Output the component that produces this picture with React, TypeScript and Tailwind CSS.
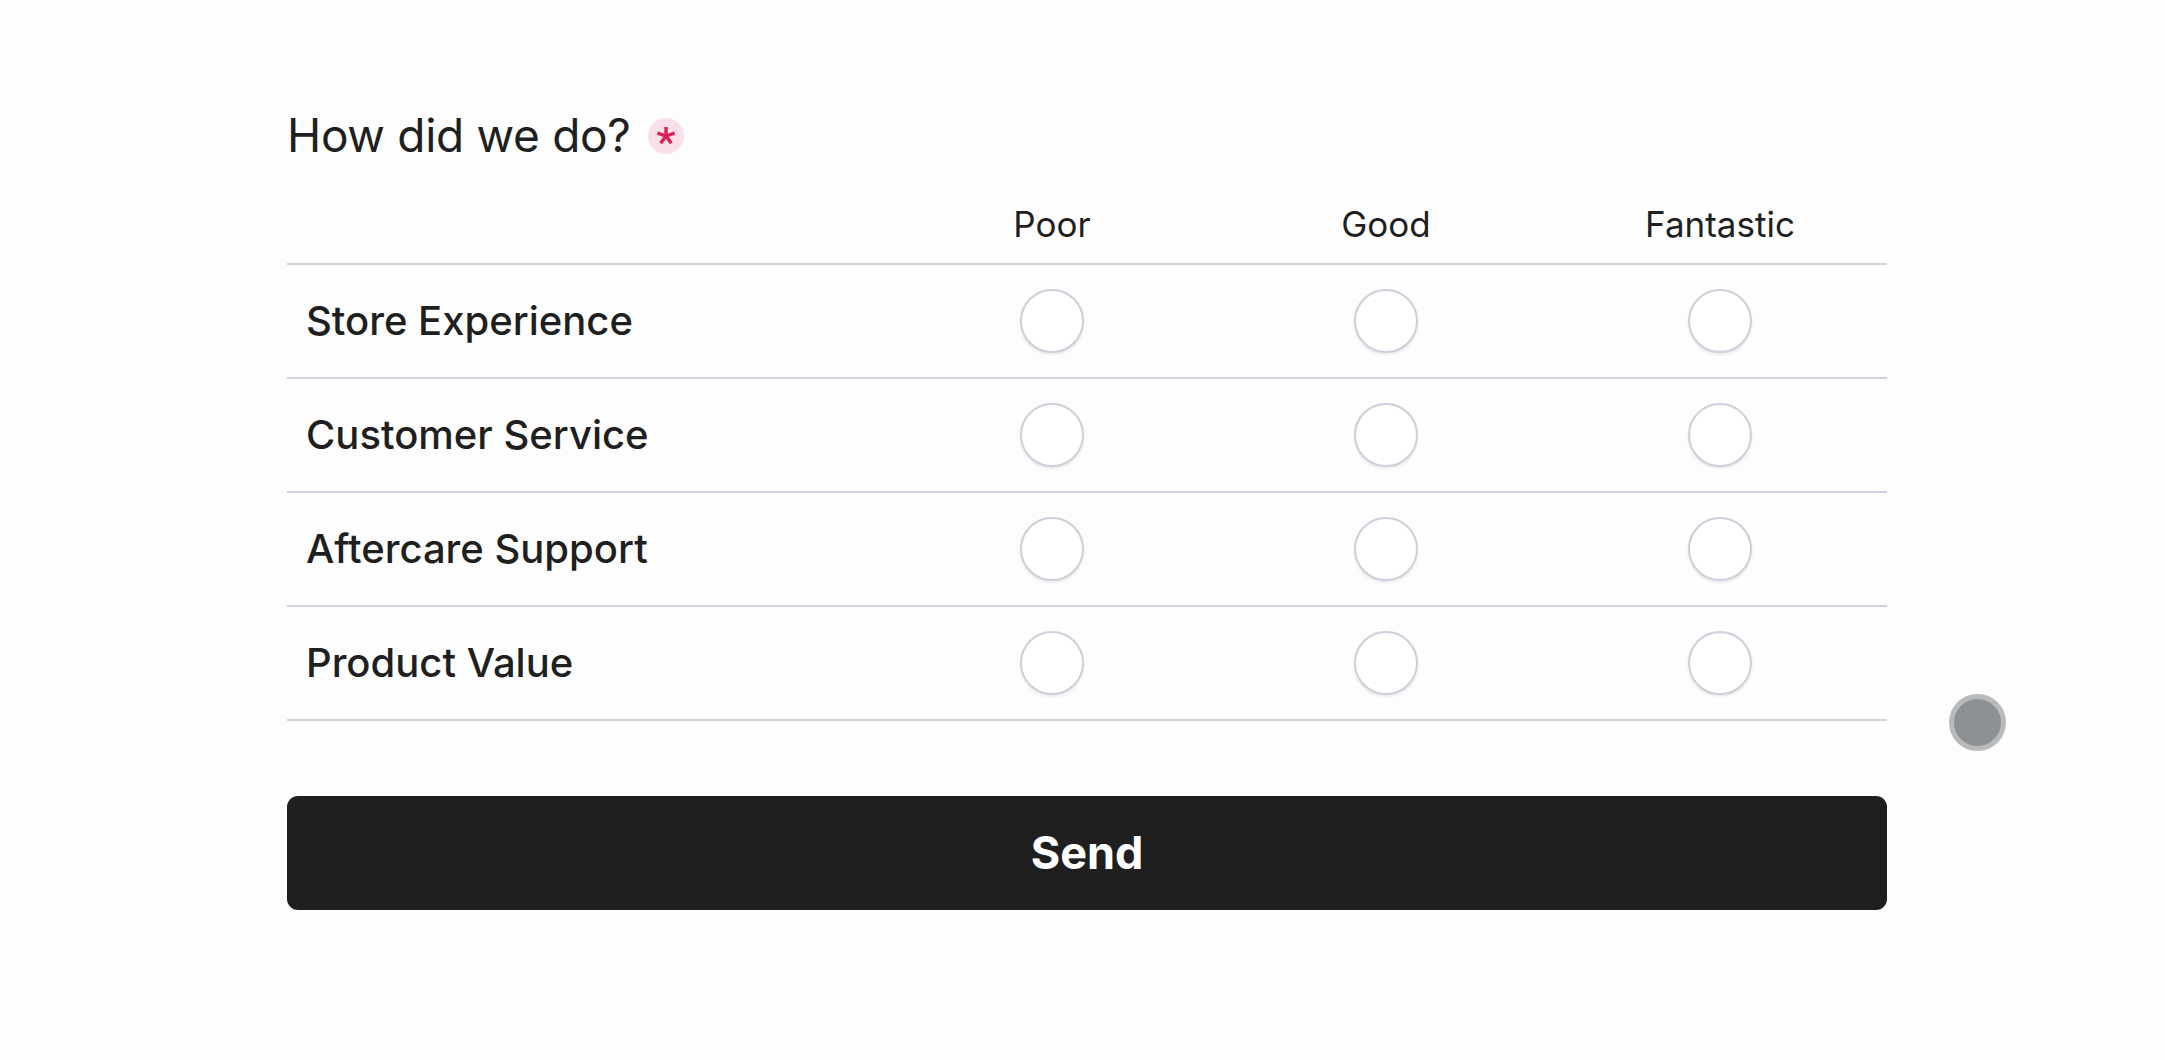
import React, { useState } from 'react'

// rating rows shown in the matrix
const rows = ['Store Experience', 'Customer Service', 'Aftercare Support', 'Product Value']
const options = ['Poor', 'Good', 'Fantastic']

const font = { fontFamily: 'Inter, "Noto Sans", sans-serif' }

const App = () => {
  const [answers, setAnswers] = useState<Record<string, string>>({})

  return (
    <div className="relative min-h-[1060px] w-full bg-[#fdfdfd] text-[#1f1f1f]" style={font}>
      <div className="ml-[287px] w-[1600px] pt-[108px]">
        <div className="flex items-center gap-[17px]">
          <h2 className="text-[46px] leading-[55px] font-normal tracking-[-0.3px]">How did we do?</h2>
          <span className="flex h-[36px] w-[36px] items-center justify-center rounded-full bg-[#f9dfe6]">
            <svg width="20" height="20" viewBox="0 0 20 20">
              <g stroke="#dc1f5b" strokeWidth="3.4" strokeLinecap="butt">
                <line x1="10" y1="10" x2="10" y2="1" />
                <line x1="10" y1="10" x2="18.6" y2="7.2" />
                <line x1="10" y1="10" x2="1.4" y2="7.2" />
                <line x1="10" y1="10" x2="15.3" y2="17.3" />
                <line x1="10" y1="10" x2="4.7" y2="17.3" />
              </g>
            </svg>
          </span>
        </div>

        <div className="mt-[30px]">
          <div className="grid grid-cols-[598px_1fr_1fr_1fr] h-[72px] items-center pb-[7px] border-b-2 border-[#cdd2dc]">
            <div />
            {options.map((o) => (
              <div key={o} className="text-center text-[35px] leading-none">
                {o}
              </div>
            ))}
          </div>
          {rows.map((r) => (
            <div
              key={r}
              className="grid grid-cols-[598px_1fr_1fr_1fr] h-[114px] items-center border-b-2 border-[#cdd2dc]"
            >
              <div className="pl-[19px] text-[40px] font-medium leading-none">{r}</div>
              {options.map((o) => {
                const checked = answers[r] === o
                return (
                  <div key={o} className="flex justify-center">
                    <button
                      type="button"
                      onClick={() => setAnswers({ ...answers, [r]: o })}
                      className="flex h-[64px] w-[64px] items-center justify-center rounded-full border-2 border-[#cbd1da] bg-white shadow-[0_2px_3px_rgba(0,0,0,0.08)]"
                    >
                      {checked && <span className="h-[30px] w-[30px] rounded-full bg-[#1f1f1f]" />}
                    </button>
                  </div>
                )
              })}
            </div>
          ))}
        </div>

        <button
          type="button"
          className="mt-[75px] flex h-[114px] w-full items-center justify-center rounded-[11px] bg-[#1f1f1f] text-[45px] font-bold text-white"
        >
          Send
        </button>
      </div>

      <div className="absolute left-[1949px] top-[694px] h-[57px] w-[57px] rounded-full border-[5px] border-[#b9babc] bg-[#8d9194]" />
    </div>
  )
}

export default App
